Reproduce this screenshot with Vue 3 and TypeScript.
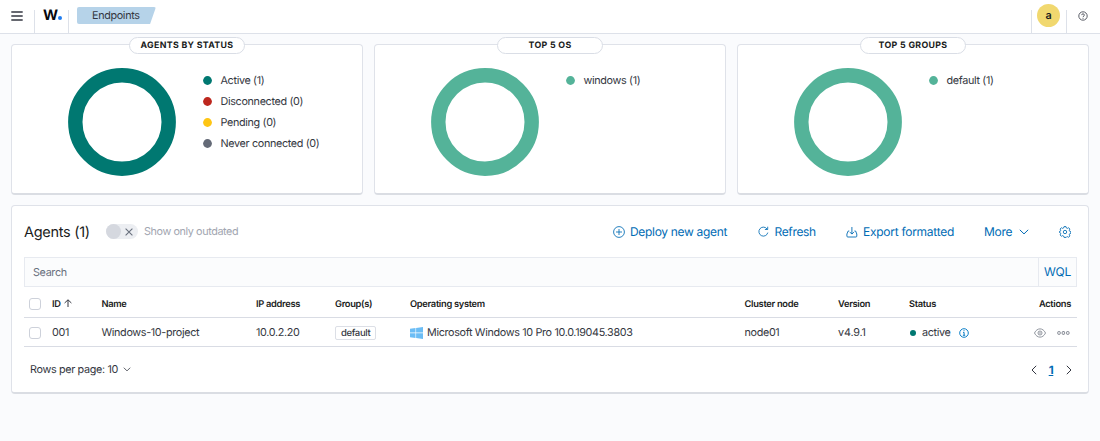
<script setup lang="ts">
interface LegendItem {
  label: string
  count: number
  color: string
}
interface ChartCard {
  title: string
  wide: boolean
  ring: string
  items: LegendItem[]
}

const cards: ChartCard[] = [
  {
    title: 'AGENTS BY STATUS',
    wide: true,
    ring: '#007871',
    items: [
      { label: 'Active', count: 1, color: '#007871' },
      { label: 'Disconnected', count: 0, color: '#bd271e' },
      { label: 'Pending', count: 0, color: '#fec514' },
      { label: 'Never connected', count: 0, color: '#646a77' },
    ],
  },
  {
    title: 'TOP 5 OS',
    wide: false,
    ring: '#54b399',
    items: [{ label: 'windows', count: 1, color: '#54b399' }],
  },
  {
    title: 'TOP 5 GROUPS',
    wide: false,
    ring: '#54b399',
    items: [{ label: 'default', count: 1, color: '#54b399' }],
  },
]
</script>

<template>
  <div class="app">
    <header class="topbar">
      <div class="cell menu">
        <svg width="12" height="10" viewBox="0 0 12 10"><path d="M.3 1h11.4M.3 5h11.4M.3 9h11.4" stroke="#343741" stroke-width="1.6" /></svg>
      </div>
      <div class="cell logo"><span class="w">W</span><span class="logo-dot"></span></div>
      <div class="cell crumbs"><span class="crumb">Endpoints</span></div>
      <div class="spacer"></div>
      <div class="cell user"><span class="avatar">a</span></div>
      <div class="cell help">
        <svg width="10" height="10" viewBox="0 0 10 10" fill="none" stroke="#4a4d57" stroke-width=".9">
          <circle cx="5" cy="5" r="4.2" />
          <path d="M3.7 4.1c0-1.8 2.7-1.7 2.7 0C6.4 5 5 5 5 6.1M5 6.9v.9" />
        </svg>
      </div>
    </header>

    <main class="content">
      <section class="cards">
        <article v-for="card in cards" :key="card.title" class="card">
          <h2 class="card-title" :class="{ wide: card.wide }">{{ card.title }}</h2>
          <svg class="donut" width="108" height="108" viewBox="0 0 108 108">
            <circle cx="54" cy="54" r="46.7" fill="none" :stroke="card.ring" stroke-width="14.4" />
          </svg>
          <ul class="legend">
            <li v-for="item in card.items" :key="item.label">
              <svg width="9" height="9" viewBox="0 0 9 9"><circle cx="4.5" cy="4.5" r="4.4" :fill="item.color" /></svg>
              <span>{{ item.label }} ({{ item.count }})</span>
            </li>
          </ul>
        </article>
      </section>

      <section class="panel">
        <div class="toolbar">
          <h1>Agents (1)</h1>
          <span class="switch">
            <span class="thumb"></span>
            <svg width="8" height="8" viewBox="0 0 8 8"><path d="M.6.6l6.8 6.8M7.4.6L.6 7.4" stroke="#69707d" stroke-width="1.1" /></svg>
          </span>
          <span class="switch-label">Show only outdated</span>
          <div class="spacer"></div>
          <a class="action deploy">
            <svg width="12" height="12" viewBox="0 0 12 12" fill="none" stroke="currentColor" stroke-width=".85"><circle cx="6" cy="6" r="5.4" /><path d="M6 3v6M3 6h6" /></svg>
            <span>Deploy new agent</span>
          </a>
          <a class="action refresh">
            <svg width="11" height="11" viewBox="0 0 11 11" fill="none" stroke="currentColor" stroke-width=".85"><path d="M9.2 3.2A4.5 4.5 0 1 0 9.8 6.6M9.7.7v2.8H6.9" /></svg>
            <span>Refresh</span>
          </a>
          <a class="action export">
            <svg width="12" height="12" viewBox="0 0 12 12" fill="none" stroke="currentColor" stroke-width=".9"><path d="M3.3 5H2.2L.9 8v2.1q0 .9.9.9h8.1q.9 0 .9-.9V8L9.6 5H8.4M5.9 1v7M3.9 6.1l2 2 2-2" /></svg>
            <span>Export formatted</span>
          </a>
          <a class="action more">
            <span>More</span>
            <svg width="10" height="6" viewBox="0 0 10 6" fill="none" stroke="currentColor" stroke-width="1"><path d="M.8.8L5 4.9 9.2.8" /></svg>
          </a>
          <svg class="gear" width="12" height="12" viewBox="0 0 12 12" fill="none" stroke="#006bb4" stroke-width=".85">
            <path d="M5 .6h2l.35 1.35 1.05.45 1.2-.7 1.3 1.35-.65 1.2.4 1 1.15.3v1.9l-1.15.3-.4 1 .65 1.2-1.3 1.35-1.2-.7-1.05.45L7 11.4H5l-.35-1.35L3.6 9.6l-1.2.7L1.1 8.95l.65-1.2-.4-1L.4 6.45v-1l.95-.2.4-1-.65-1.2L2.4 1.7l1.2.7 1.05-.45z" />
            <circle cx="6" cy="6" r="1.7" />
          </svg>
        </div>

        <div class="search">
          <span class="query">Search</span>
          <span class="wql">WQL</span>
        </div>

        <div class="row head">
          <span><i class="box"></i></span>
          <span class="sorted">ID
            <svg width="8" height="8" viewBox="0 0 8 8" fill="none" stroke="#343741" stroke-width="1"><path d="M4 8V.9M.6 4L4 .8 7.4 4" /></svg>
          </span>
          <span>Name</span>
          <span>IP address</span>
          <span>Group(s)</span>
          <span>Operating system</span>
          <span>Cluster node</span>
          <span>Version</span>
          <span>Status</span>
          <span class="right">Actions</span>
        </div>
        <div class="row body">
          <span><i class="box"></i></span>
          <span>001</span>
          <span class="name">Windows-10-project</span>
          <span class="ip">10.0.2.20</span>
          <span class="groups"><b class="badge">default</b></span>
          <span class="os">
            <svg width="13" height="12" viewBox="0 0 13 12" fill="#6cbdf5"><path d="M0 1.8L5.5 1v4.6H0zM6.1.9L13 0v5.6H6.1zM0 6.2h5.5v4.7L0 10.2zM6.1 6.2H13V12l-6.9-1z" /></svg>
            <span>Microsoft Windows 10 Pro 10.0.19045.3803</span>
          </span>
          <span>node01</span>
          <span class="version">v4.9.1</span>
          <span class="status">
            <i class="dot"></i>
            <span>active</span>
            <svg width="10" height="10" viewBox="0 0 10 10" fill="none" stroke="#0079c4" stroke-width=".95"><circle cx="5" cy="5" r="4.3" /><path d="M5 2.2v1M4 4.4h1.1v2.9M3.9 7.3h2.3" /></svg>
          </span>
          <span class="right icons">
            <svg width="12" height="10" viewBox="0 0 12 10" fill="none" stroke="#858a94" stroke-width=".9"><path d="M.5 5C3-.5 9-.5 11.5 5 9 10.5 3 10.5.5 5z" /><circle cx="6" cy="5" r="2" /><circle cx="6" cy="5" r=".4" /></svg>
            <svg width="13" height="4" viewBox="0 0 13 4" fill="none" stroke="#7d828d" stroke-width="1"><rect x=".8" y=".6" width="2.4" height="2.7" rx=".6" /><rect x="5.2" y=".6" width="2.4" height="2.7" rx=".6" /><rect x="9.6" y=".6" width="2.4" height="2.7" rx=".6" /></svg>
          </span>
        </div>

        <div class="pager">
          <span>Rows per page: 10</span>
          <svg class="rows-arrow" width="8" height="5" viewBox="0 0 8 5" fill="none" stroke="#343741" stroke-width=".8"><path d="M.8.7L4 3.9 7.2.7" /></svg>
          <div class="spacer"></div>
          <svg width="6" height="10" viewBox="0 0 6 10" fill="none" stroke="#343741" stroke-width="1"><path d="M5.2.8L1 5l4.2 4.2" /></svg>
          <span class="page">1</span>
          <svg width="6" height="10" viewBox="0 0 6 10" fill="none" stroke="#343741" stroke-width="1"><path d="M.8.8L5 5 .8 9.2" /></svg>
        </div>
      </section>
    </main>
  </div>
</template>

<style>
body {
  background: #fafbfd;
}
</style>

<style scoped>
* {
  box-sizing: border-box;
}
.app {
  width: 1100px;
  height: 441px;
  overflow: hidden;
  background: #fafbfd;
  color: #343741;
  font: 400 10.8px/16px Inter, "Liberation Sans", sans-serif;
  letter-spacing: -0.34px;
  text-rendering: geometricPrecision;
  white-space: nowrap;
}
.spacer {
  flex: 1;
}
.topbar {
  display: flex;
  align-items: flex-end;
  height: 34px;
  background: #fff;
  border-bottom: 1px solid #dde1e9;
}
.cell {
  display: flex;
  align-items: center;
  height: 23px;
  padding-bottom: 12px;
  border-right: 1px solid #dde1e9;
}
.menu {
  width: 35px;
  padding-left: 11px;
}
.logo {
  width: 34px;
  padding-left: 8px;
}
.w {
  font-size: 14.5px;
  font-weight: 700;
  line-height: 18px;
  color: #07080c;
}
.logo-dot {
  width: 4px;
  height: 4px;
  margin: 5px 0 0 0.5px;
  border-radius: 50%;
  background: #1f7cf0;
}
.crumbs {
  padding-left: 8px;
  border: 0;
}
.crumb {
  width: 79px;
  height: 17px;
  padding-left: 15px;
  line-height: 18px;
  background: #b6d3e9;
  border-radius: 2px;
  clip-path: polygon(0 0, 100% 0, 92.5% 100%, 0 100%);
}
.user {
  width: 36px;
  padding-left: 5px;
  border-left: 1px solid #dde1e9;
}
.avatar {
  flex: none;
  width: 23px;
  height: 23px;
  border-radius: 50%;
  background: #f1d86f;
  color: #1a1c21;
  font-weight: 600;
  line-height: 24px;
  text-align: center;
}
.help {
  width: 33px;
  padding-left: 11px;
  border: 0;
}
.content {
  padding: 10px 11px 0;
}
.cards {
  display: grid;
  grid-template-columns: repeat(3, 352px);
  gap: 11px;
}
.card {
  position: relative;
  display: flex;
  height: 151px;
  padding: 23px 0 0 56px;
  background: #fff;
  border: 1px solid #dfe2e9;
  border-bottom: 2px solid #dadde3;
  border-radius: 4px;
}
.card-title {
  position: absolute;
  top: -8px;
  left: 50%;
  width: 106px;
  height: 17px;
  margin: 0;
  transform: translateX(-50%);
  border: 1px solid #dadee6;
  border-radius: 9px;
  background: #fff;
  color: #1a1c21;
  font-size: 8.8px;
  font-weight: 700;
  line-height: 16px;
  letter-spacing: 0.33px;
  text-align: center;
}
.card-title.wide {
  width: 116px;
}
.legend {
  margin: 2px 0 0 27px;
  padding: 0;
  list-style: none;
}
.legend li {
  display: flex;
  align-items: center;
  gap: 8.5px;
  height: 20.9px;
}
.legend span {
  padding-top: 1px;
}
.panel {
  height: 189px;
  margin-top: 10px;
  padding: 0 11px 0 12px;
  background: #fff;
  border: 1px solid #dfe2e9;
  border-bottom: 2px solid #dadde3;
  border-radius: 4px;
}
.toolbar {
  display: flex;
  align-items: center;
  height: 51px;
}
h1 {
  width: 82px;
  margin: 2px 0 0;
  color: #1a1c21;
  font-size: 14.5px;
  font-weight: 400;
  letter-spacing: -0.3px;
}
.switch {
  display: flex;
  align-items: center;
  justify-content: space-between;
  width: 32px;
  height: 15px;
  padding-right: 5px;
  border-radius: 8px;
  background: #eceef2;
}
.thumb {
  width: 15px;
  height: 15px;
  border-radius: 50%;
  background: #d5d8df;
}
.switch-label {
  margin: 1px 0 0 6px;
  color: #a2a6b1;
  letter-spacing: -0.4px;
}
.action {
  display: flex;
  align-items: center;
  color: #006bb4;
  font-size: 12px;
  letter-spacing: -0.27px;
}
.deploy { width: 145.5px; gap: 5.5px; letter-spacing: -0.32px; }
.refresh { width: 88px; gap: 5.5px; letter-spacing: -0.35px; }
.export { width: 138px; gap: 5px; }
.more { width: 75px; gap: 7px; }
.gear {
  margin-right: 6px;
}
.search {
  display: flex;
  height: 30px;
  border: 1px solid #e7eaf0;
  background: #fbfcfd;
}
.query {
  flex: 1;
  padding-left: 8px;
  color: #69707d;
  line-height: 29px;
}
.wql {
  width: 38px;
  border-left: 1px solid #e7eaf0;
  color: #006bb4;
  font-size: 12px;
  line-height: 28px;
  text-align: center;
}
.row {
  display: grid;
  grid-template-columns: 28px 49.5px 154.5px 79px 75px 334.5px 93.5px 71px 1fr 62px;
  align-items: center;
  border-bottom: 1px solid #d9dce4;
}
.head {
  height: 31px;
  padding-top: 5px;
  color: #1a1c21;
  font-size: 9.3px;
  font-weight: 600;
  line-height: 18px;
  letter-spacing: -0.3px;
}
.head > span:not(:first-child) {
  padding-top: 1px;
}
.head .box {
  margin-top: -1px;
}
.body {
  height: 29px;
  padding-top: 1px;
}
.version {
  letter-spacing: -0.15px;
}
.sorted svg {
  margin-left: 1.5px;
}
.box {
  display: block;
  width: 12px;
  height: 12px;
  margin-left: 5px;
  border: 1px solid #cdd1da;
  border-radius: 3px;
  background: #fff;
}
.badge {
  height: 14px;
  padding: 0 5px;
  border: 1px solid #dcdfe6;
  border-radius: 2px;
  font-size: 9.5px;
  font-weight: 500;
  line-height: 13px;
}
.groups,
.os,
.status {
  display: flex;
  align-items: center;
}
.os {
  gap: 4px;
}
.dot {
  width: 6px;
  height: 6px;
  margin: 0 6px 0 1px;
  border-radius: 50%;
  background: #007871;
}
.status svg {
  margin-left: 8px;
}
.right {
  padding-right: 6px;
  text-align: right;
}
.icons {
  display: flex;
  align-items: center;
  justify-content: flex-end;
  gap: 11px;
  padding-right: 7.5px;
}
.pager {
  display: flex;
  align-items: center;
  height: 45px;
  padding: 0 5.5px 0 6px;
}
.rows-arrow {
  margin-left: 5px;
}
.page {
  width: 7px;
  margin: 0 11px;
  color: #006bb4;
  font-size: 11.5px;
  font-weight: 700;
  text-align: center;
  text-decoration: underline;
}
</style>
